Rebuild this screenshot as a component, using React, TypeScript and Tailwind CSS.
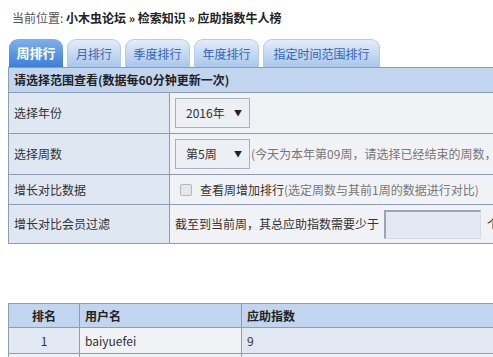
const tabs = ["月排行", "季度排行", "年度排行", "指定时间范围排行"];
const tabWidths = ["w-[54px]", "w-[65px]", "w-[65px]", "w-[117px]"];

const Select = ({ label }: { label: string }) => (
  <div className="flex h-[30px] w-[75px] shrink-0 items-center justify-between border border-[#a9b1bd] bg-[#eceff3] pl-[10px] pr-[7px] text-[12px] text-[#333]">
    <span>{label}</span>
    <span className="text-[8px] text-[#222]">▼</span>
  </div>
);

export default function App() {
  return (
    <div
      className="h-[357px] w-[493px] overflow-hidden bg-white text-[12px] text-[#333]"
      style={{ fontFamily: '"Microsoft YaHei", "Noto Sans CJK SC", sans-serif' }}
    >
      <div className="whitespace-nowrap pl-[12px] pt-[8px] leading-[20px]">
        <span className="text-[#555]">当前位置: </span>
        <span className="font-bold text-[#222]">小木虫论坛 » 检索知识 » 应助指数牛人榜</span>
      </div>

      <div className="ml-[9px] mt-[11px] flex h-[28px] items-end gap-[4px]">
        <div className="flex h-[28px] w-[54px] items-center justify-center rounded-t-[9px] bg-gradient-to-b from-[#7fb0ea] to-[#3d7fd8] text-[13px] font-bold text-white">
          周排行
        </div>
        {tabs.map((t, i) => (
          <div
            key={t}
            className={`flex h-[28px] ${tabWidths[i]} items-center justify-center rounded-t-[9px] border border-b-0 border-[#b5cbe6] bg-gradient-to-b from-[#e3edf9] to-[#a8c6ea] text-[#3566b8]`}
          >
            {t}
          </div>
        ))}
      </div>

      <table className="ml-[8px] w-[700px] table-fixed border-collapse">
        <colgroup>
          <col className="w-[161px]" />
          <col />
        </colgroup>
        <tbody>
          <tr className="h-[25px]">
            <td colSpan={2} className="border border-[#8d9db5] bg-[#c2d5ee] px-[5px] font-bold text-[#222]">
              请选择范围查看(数据每60分钟更新一次)
            </td>
          </tr>
          <tr className="h-[41px]">
            <td className="border border-[#8d9db5] bg-[#dfe7f2] px-[5px]">选择年份</td>
            <td className="border border-[#8d9db5] bg-[#f1f2f6] px-[5px]">
              <Select label="2016年" />
            </td>
          </tr>
          <tr className="h-[41px]">
            <td className="border border-[#8d9db5] bg-[#dfe7f2] px-[5px]">选择周数</td>
            <td className="border border-[#8d9db5] bg-[#f1f2f6] px-[5px]">
              <div className="flex items-center whitespace-nowrap">
                <Select label="第5周" />
                <span className="ml-[1px] text-[#777]">(今天为本年第09周，请选择已经结束的周数，</span>
              </div>
            </td>
          </tr>
          <tr className="h-[30px]">
            <td className="border border-[#8d9db5] bg-[#dfe7f2] px-[5px]">增长对比数据</td>
            <td className="border border-[#8d9db5] bg-[#f1f2f6] px-[5px]">
              <div className="flex items-center whitespace-nowrap">
                <span className="ml-[5px] mr-[8px] h-[12px] w-[12px] rounded-[2px] border border-[#b4b8be] bg-[#e6e8eb]" />
                <span>查看周增加排行</span>
                <span className="text-[#777]">(选定周数与其前1周的数据进行对比)</span>
              </div>
            </td>
          </tr>
          <tr className="h-[39px]">
            <td className="border border-[#8d9db5] bg-[#dfe7f2] px-[5px]">增长对比会员过滤</td>
            <td className="border border-[#8d9db5] bg-[#f1f2f6] px-[5px]">
              <div className="flex items-center whitespace-nowrap">
                <span>截至到当前周，其总应助指数需要少于</span>
                <span className="ml-[5px] h-[29px] w-[97px] shrink-0 border-2 border-b border-r border-[#9ea4ad] border-b-[#d5dbe3] border-r-[#d5dbe3] bg-[#e2e9f2]" />
                <span className="ml-[6px]">个</span>
              </div>
            </td>
          </tr>
        </tbody>
      </table>

      <table className="ml-[8px] mt-[59px] w-[700px] table-fixed border-collapse">
        <colgroup>
          <col className="w-[71px]" />
          <col className="w-[162px]" />
          <col />
        </colgroup>
        <tbody>
          <tr className="h-[24px] font-bold text-[#222]">
            <td className="border border-[#8d9db5] bg-[#c2d5ee] text-center">排名</td>
            <td className="border border-[#8d9db5] bg-[#c2d5ee] px-[5px]">用户名</td>
            <td className="border border-[#8d9db5] bg-[#c2d5ee] px-[5px]">应助指数</td>
          </tr>
          <tr className="h-[26px]">
            <td className="border border-[#8d9db5] bg-[#e2e8f1] text-center">1</td>
            <td className="border border-[#8d9db5] bg-[#f1f2f6] px-[5px]">baiyuefei</td>
            <td className="border border-[#8d9db5] bg-[#e2e8f1] px-[5px]">9</td>
          </tr>
          <tr className="h-[26px]">
            <td className="border border-[#8d9db5] bg-[#f1f2f6]" />
            <td className="border border-[#8d9db5] bg-[#f1f2f6]" />
            <td className="border border-[#8d9db5] bg-[#f1f2f6]" />
          </tr>
        </tbody>
      </table>
    </div>
  );
}
